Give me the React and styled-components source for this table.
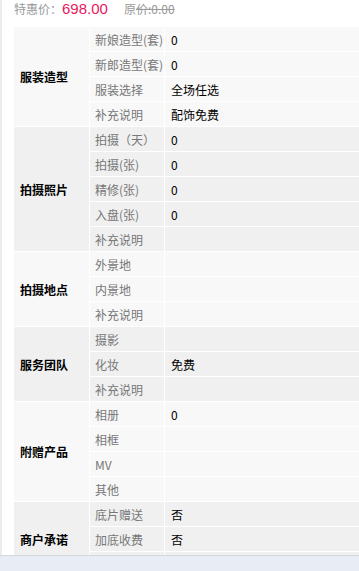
import styled, { createGlobalStyle } from 'styled-components';

const GlobalStyle = createGlobalStyle`
  html, body {
    margin: 0;
    padding: 0;
    background: #fff;
    font-family: "Noto Sans CJK SC", "Liberation Sans", sans-serif;
    font-size: 12px;
  }
`;

const Page = styled.div`
  border-left: 2px solid #ececec;
  padding: 0 0 40px 12px;
  min-height: 571px;
  box-sizing: border-box;
`;

const PriceBar = styled.div`
  height: 27px;
  display: flex;
  align-items: flex-start;
  gap: 16px;
  color: #999;
  line-height: 18px;
`;

const Price = styled.span`
  font-size: 12px;
`;

const Amount = styled.span`
  color: #e8185e;
  font-size: 15px;
  font-family: "Liberation Sans", Arial, sans-serif;
`;

const Struck = styled.span`
  text-decoration: line-through;
`;

const Group = styled.div`
  display: grid;
  grid-template-columns: 75px 74px 1fr;
  gap: 1px;
  background: #fff;
  margin-bottom: 1px;
  margin-right: -4px;
`;

const GroupTitle = styled.div`
  grid-row: 1 / span ${(p) => p.$rows};
  background: ${(p) => p.$bg};
  display: flex;
  align-items: center;
  padding-left: 6px;
  font-weight: bold;
  color: #000;
`;

const Cell = styled.div`
  height: 24px;
  background: ${(p) => p.$bg};
  display: flex;
  align-items: center;
  padding-left: ${(p) => (p.$value ? '6px' : '5px')};
  color: ${(p) => (p.$value ? '#000' : '#777')};
  white-space: nowrap;
  overflow: hidden;
`;

const Footer = styled.div`
  position: fixed;
  left: 0;
  right: 0;
  bottom: 0;
  height: 15px;
  background: #e8edf5;
  border-top: 1px solid #d4d8de;
`;

const groups = [
  {
    title: '服装造型',
    rows: [
      ['新娘造型(套)', '0'],
      ['新郎造型(套)', '0'],
      ['服装选择', '全场任选'],
      ['补充说明', '配饰免费'],
    ],
  },
  {
    title: '拍摄照片',
    rows: [
      ['拍摄（天）', '0'],
      ['拍摄(张)', '0'],
      ['精修(张)', '0'],
      ['入盘(张)', '0'],
      ['补充说明', ''],
    ],
  },
  {
    title: '拍摄地点',
    rows: [
      ['外景地', ''],
      ['内景地', ''],
      ['补充说明', ''],
    ],
  },
  {
    title: '服务团队',
    rows: [
      ['摄影', ''],
      ['化妆', '免费'],
      ['补充说明', ''],
    ],
  },
  {
    title: '附赠产品',
    rows: [
      ['相册', '0'],
      ['相框', ''],
      ['MV', ''],
      ['其他', ''],
    ],
  },
  {
    title: '商户承诺',
    rows: [
      ['底片赠送', '否'],
      ['加底收费', '否'],
      ['', ''],
    ],
  },
];

export default function App() {
  return (
    <>
      <GlobalStyle />
      <Page>
        <PriceBar>
          <Price>
            特惠价：<Amount>698.00</Amount>
          </Price>
          <Price>
            原<Struck>价:0.00</Struck>
          </Price>
        </PriceBar>
        {groups.map((g, i) => {
          const bg = i % 2 === 0 ? '#f8f8f8' : '#f0f0f0';
          return (
            <Group key={g.title}>
              <GroupTitle $rows={g.rows.length} $bg={bg}>
                {g.title}
              </GroupTitle>
              {g.rows.map(([label, value], j) => [
                <Cell key={j + 'l'} $bg={bg}>
                  {label}
                </Cell>,
                <Cell key={j + 'v'} $bg={bg} $value>
                  {value}
                </Cell>,
              ])}
            </Group>
          );
        })}
      </Page>
      <Footer />
    </>
  );
}
